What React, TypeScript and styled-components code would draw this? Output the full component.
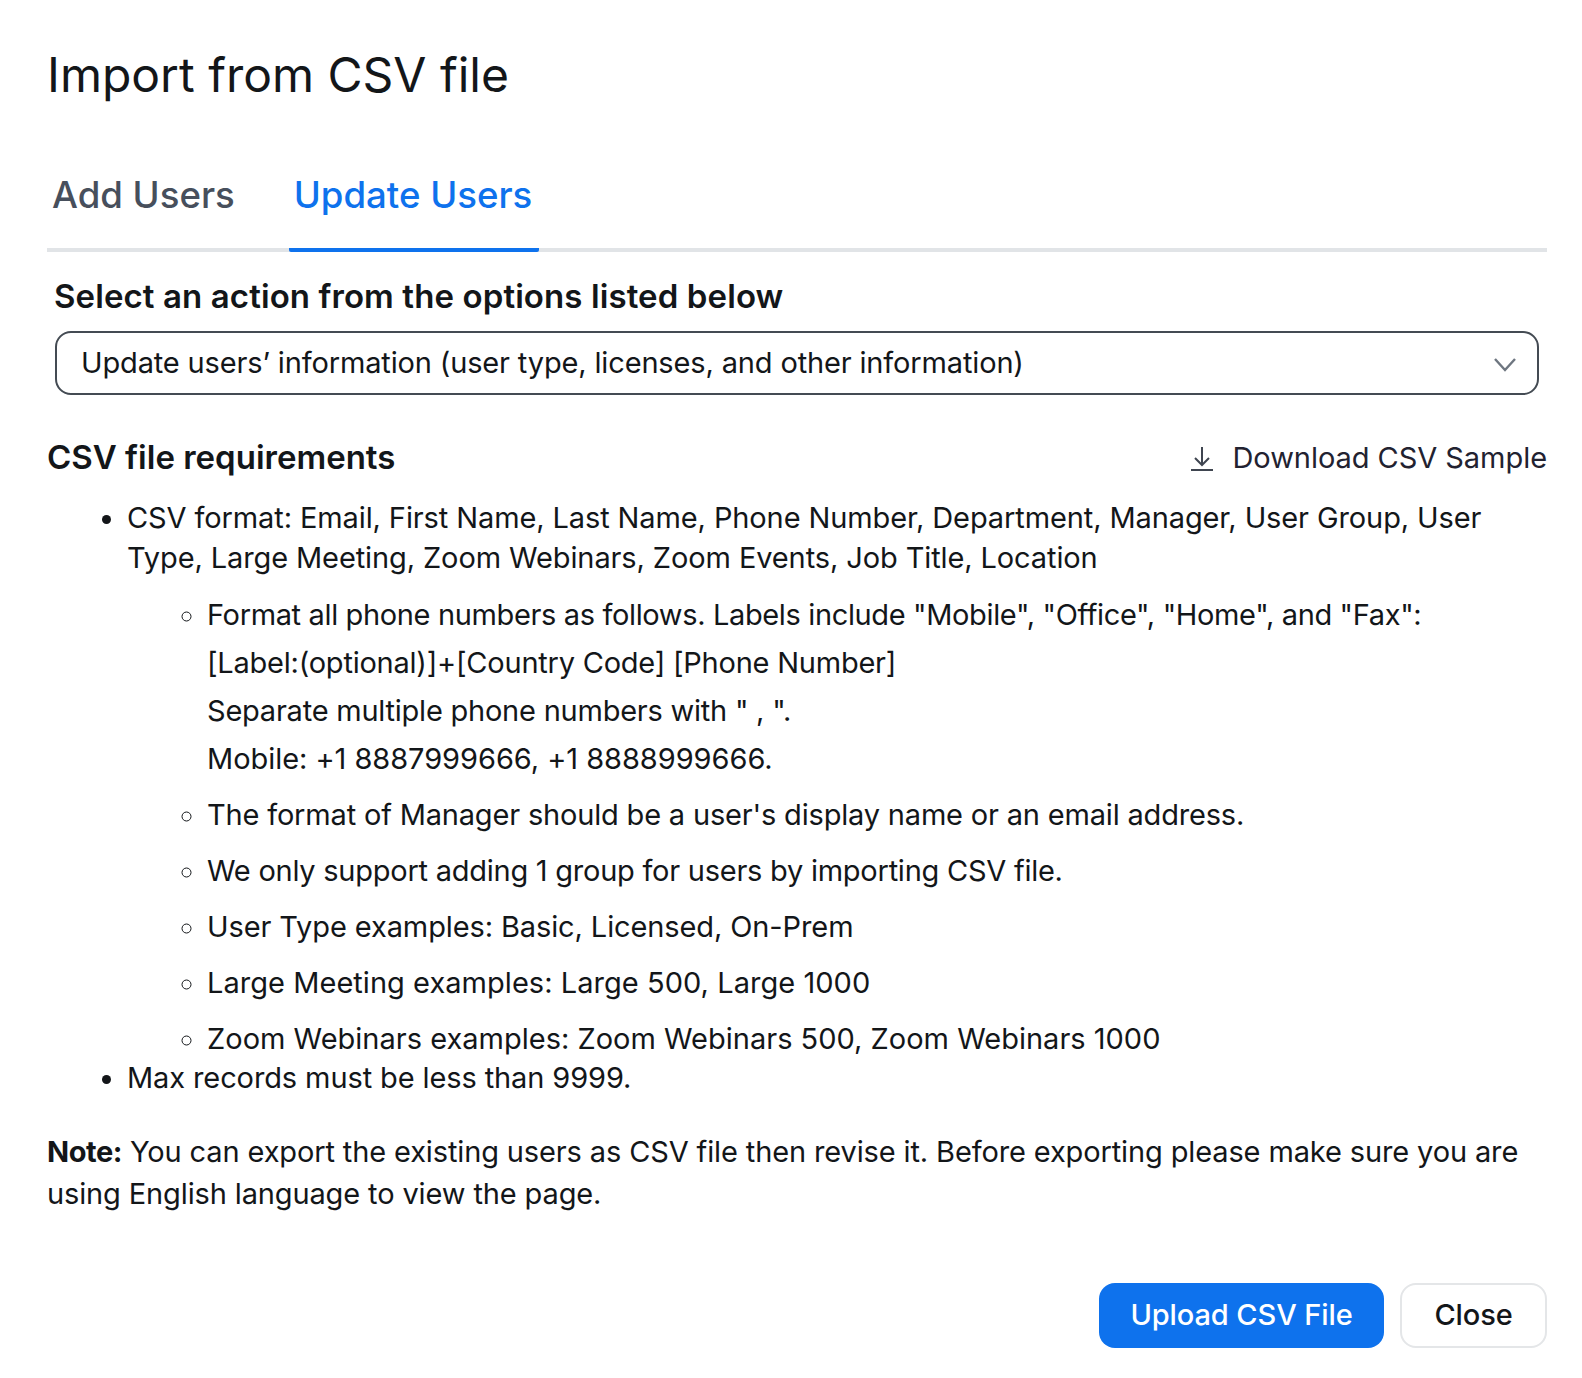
import React from "react";
import styled, { createGlobalStyle } from "styled-components";

const GlobalStyle = createGlobalStyle`
  html, body {
    margin: 0;
    padding: 0;
    background: #fff;
  }
  body {
    font-family: Inter, "Liberation Sans", sans-serif;
    color: #131619;
  }
`;

const Dialog = styled.div`
  width: 1582px;
  height: 1378px;
  box-sizing: border-box;
  padding: 45px 35px 0 47px;
  display: flex;
  flex-direction: column;
`;

const Title = styled.h1`
  margin: 0;
  font-size: 48px;
  line-height: 60px;
  font-weight: 400;
`;

const Tabs = styled.div`
  display: flex;
  margin-top: 46px;
  height: 101px;
  box-sizing: border-box;
  border-bottom: 4px solid #e1e4e7;
`;

const Tab = styled.div<{ $active?: boolean }>`
  padding: 0 7px 0 5px;
  margin-right: ${(p) => (p.$active ? 0 : "47px")};
  height: 101px;
  box-sizing: border-box;
  line-height: 88px;
  font-size: 36.6px;
  font-weight: 500;
  color: ${(p) => (p.$active ? "#0e72ed" : "#474f5c")};
  border-bottom: 4px solid ${(p) => (p.$active ? "#0e72ed" : "transparent")};
  border-radius: 0 0 2px 2px;
`;

const FieldLabel = styled.div`
  margin: 23px 0 0 7px;
  font-size: 33px;
  line-height: 42px;
  font-weight: 600;
  letter-spacing: 0.1px;
  padding-bottom: 2px;
`;

const Select = styled.div`
  margin: 12px 8px 0 8px;
  height: 64px;
  box-sizing: border-box;
  border: 2px solid #444b53;
  border-radius: 16px;
  padding: 0 20px 1px 24px;
  display: flex;
  align-items: center;
  justify-content: space-between;
  font-size: 29px;
  letter-spacing: -0.15px;
`;

const RequirementsHeader = styled.div`
  margin-top: 41px;
  display: flex;
  justify-content: space-between;
  align-items: center;
  height: 44px;
`;

const SectionTitle = styled.h2`
  margin: 0;
  padding-bottom: 2px;
  font-size: 33px;
  line-height: 42px;
  font-weight: 600;
`;

const DownloadLink = styled.a`
  display: flex;
  align-items: center;
  gap: 19px;
  font-size: 29px;
  letter-spacing: -0.05px;
  color: #222230;
  padding-bottom: 2px;
`;

const DownloadGlyph = styled.svg`
  margin-top: 4px;
`;

const OuterList = styled.ul`
  margin: 18px 0 0;
  padding: 0 0 0 80px;
  list-style: disc;
  font-size: 29px;
  line-height: 40.4px;
  letter-spacing: -0.11px;
`;

const InnerList = styled.ul`
  margin: 0 0 -5px;
  padding: 12px 0 0 80px;
  list-style: circle;
`;

const InnerItem = styled.li<{ $tracking?: number }>`
  line-height: 48px;
  letter-spacing: ${(p) => p.$tracking ?? 0}px;
  & + & {
    margin-top: 8px;
  }
`;

const PhoneLine = styled.span<{ $tracking: number }>`
  display: block;
  letter-spacing: ${(p) => p.$tracking}px;
`;

const Note = styled.p`
  margin: 33px 0 0;
  font-size: 29px;
  line-height: 41.5px;
  letter-spacing: -0.13px;
`;

const NoteLabel = styled.b`
  letter-spacing: -0.45px;
`;

const Footer = styled.div`
  margin-top: auto;
  margin-bottom: 30px;
  display: flex;
  justify-content: flex-end;
  gap: 16px;
`;

const Button = styled.button<{ $primary?: boolean }>`
  height: 65px;
  box-sizing: border-box;
  border-radius: 16px;
  font-family: inherit;
  font-size: 29px;
  font-weight: 500;
  letter-spacing: -0.1px;
  padding: 0 0 3px;
  width: ${(p) => (p.$primary ? "285px" : "147px")};
  background: ${(p) => (p.$primary ? "#0e72ed" : "#fff")};
  color: ${(p) => (p.$primary ? "#fff" : "#131619")};
  border: ${(p) => (p.$primary ? "none" : "2px solid #e4e6e8")};
`;

const ChevronIcon = () => (
  <svg width="24" height="24" viewBox="0 0 24 24" fill="none" stroke="#6e7680" strokeWidth="2.4">
    <path d="M2 8l10 11 10-11" />
  </svg>
);

const DownloadIcon = () => (
  <DownloadGlyph width="22" height="24" viewBox="0 0 22 24" fill="none" stroke="#3f4550" strokeWidth="2">
    <path d="M11 0v18M4 11l7 7 7-7M0 23h22" />
  </DownloadGlyph>
);

const App = () => (
  <Dialog>
    <GlobalStyle />
    <Title>Import from CSV file</Title>
    <Tabs>
      <Tab>Add Users</Tab>
      <Tab $active>Update Users</Tab>
    </Tabs>
    <FieldLabel>Select an action from the options listed below</FieldLabel>
    <Select>
      <span>Update users’ information (user type, licenses, and other information)</span>
      <ChevronIcon />
    </Select>
    <RequirementsHeader>
      <SectionTitle>CSV file requirements</SectionTitle>
      <DownloadLink>
        <DownloadIcon />
        Download CSV Sample
      </DownloadLink>
    </RequirementsHeader>
    <OuterList>
      <li>
        CSV format: Email, First Name, Last Name, Phone Number, Department, Manager, User Group, User Type, Large
        Meeting, Zoom Webinars, Zoom Events, Job Title, Location
        <InnerList>
          <InnerItem>
            <PhoneLine $tracking={-0.36}>
              Format all phone numbers as follows. Labels include "Mobile", "Office", "Home", and "Fax":
            </PhoneLine>
            <PhoneLine $tracking={-0.23}>[Label:(optional)]+[Country Code] [Phone Number]</PhoneLine>
            <PhoneLine $tracking={-0.23}>Separate multiple phone numbers with " , ".</PhoneLine>
            <PhoneLine $tracking={-0.05}>Mobile: +1 8887999666, +1 8888999666.</PhoneLine>
          </InnerItem>
          <InnerItem $tracking={-0.18}>
            The format of Manager should be a user's display name or an email address.
          </InnerItem>
          <InnerItem $tracking={-0.25}>We only support adding 1 group for users by importing CSV file.</InnerItem>
          <InnerItem $tracking={-0.11}>User Type examples: Basic, Licensed, On-Prem</InnerItem>
          <InnerItem $tracking={0.04}>Large Meeting examples: Large 500, Large 1000</InnerItem>
          <InnerItem>Zoom Webinars examples: Zoom Webinars 500, Zoom Webinars 1000</InnerItem>
        </InnerList>
      </li>
      <li>Max records must be less than 9999.</li>
    </OuterList>
    <Note>
      <NoteLabel>Note:</NoteLabel> You can export the existing users as CSV file then revise it. Before exporting please
      make sure you are using English language to view the page.
    </Note>
    <Footer>
      <Button $primary>Upload CSV File</Button>
      <Button>Close</Button>
    </Footer>
  </Dialog>
);

export default App;
